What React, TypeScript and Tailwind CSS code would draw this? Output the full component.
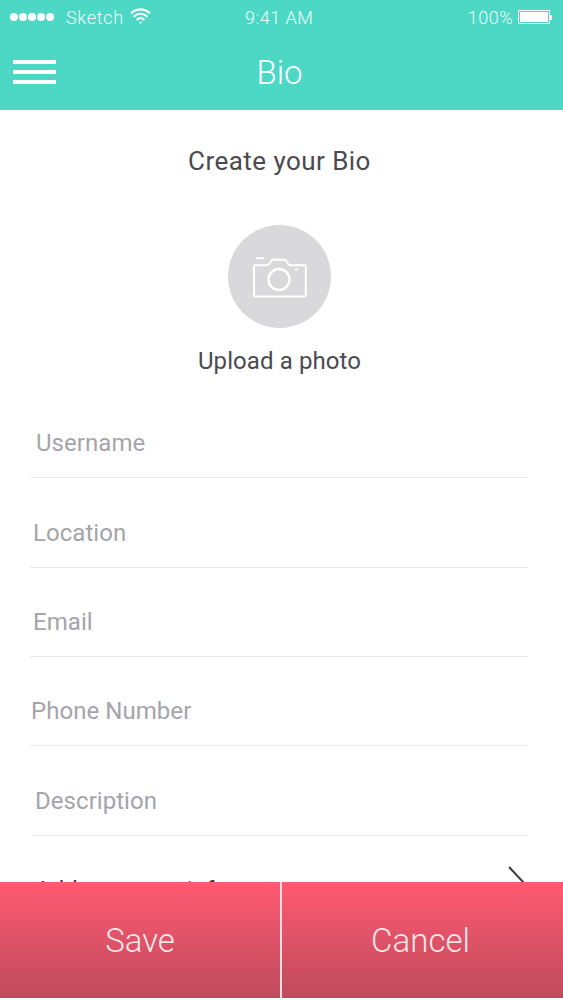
import { Wifi } from 'lucide-react'

const fields = [
  { label: 'Username', textPad: 'pl-[6px]', rowPad: 'pl-[30px]', h: 'h-[90px]' },
  { label: 'Location', textPad: 'pl-[3px]', rowPad: 'pl-[30px]', h: 'h-[90px]' },
  { label: 'Email', textPad: 'pl-[3px]', rowPad: 'pl-[30px]', h: 'h-[89px]' },
  { label: 'Phone Number', textPad: 'pl-[1px]', rowPad: 'pl-[30px]', h: 'h-[89px]' },
  { label: 'Description', textPad: 'pl-[3px]', rowPad: 'pl-[32px]', h: 'h-[90px]' },
]

function CameraIcon() {
  return (
    <svg width="56" height="44" viewBox="0 0 56 44" fill="none" stroke="white" strokeWidth="2" strokeLinejoin="round">
      <path d="M2 12c0-1 .8-1.8 1.8-1.8h11.4c1 0 1.8-.6 2.4-1.6l1.6-2.6c.5-.8 1.3-1.2 2.2-1.2h10.6c.9 0 1.7.4 2.2 1.2l2 3c.6.8 1.4 1.2 2.3 1.2H52c1 0 1.8.8 1.8 1.8v27.6c0 1-.8 1.8-1.8 1.8H3.8c-1 0-1.8-.8-1.8-1.8z" />
      <circle cx="27" cy="24.5" r="10.5" strokeWidth="2.4" />
      <path d="M4 3.2h8" />
      <path d="M43 14.5h2.5" />
    </svg>
  )
}

function Battery() {
  return (
    <div className="flex items-center">
      <div className="h-[14px] w-[32px] border border-white p-px">
        <div className="h-full w-full bg-white" />
      </div>
      <div className="h-[5px] w-[2px] bg-white" />
    </div>
  )
}

export default function App() {
  return (
    <div className="flex h-[1000px] w-[563px] flex-col overflow-hidden bg-white font-['Roboto',sans-serif]">
      <header className="h-[110px] shrink-0 bg-[#4cd8c5] text-white">
        <div className="relative flex h-[34px] items-center justify-between pl-[10px] pr-[11px] font-['Roboto',sans-serif] text-[18px] font-light text-[#effdfa]">
          <div className="flex items-center">
            <div className="flex gap-px">
              {[0, 1, 2, 3, 4].map((i) => <span key={i} className="h-[8px] w-[8px] rounded-full bg-white" />)}
            </div>
            <span className="ml-[12px] tracking-[0.7px]">Sketch</span>
            <Wifi size={21} strokeWidth={2.5} className="ml-[6px] -mt-1 text-white" />
          </div>
          <span className="absolute left-[245px] tracking-[0.5px]">9:41 AM</span>
          <div className="flex items-center gap-[5px]">
            <span className="tracking-[0.5px]">100%</span>
            <Battery />
          </div>
        </div>
        <div className="relative flex h-[76px] items-center justify-center pr-[4px]">
          <div className="absolute left-[13px] top-[26px] flex w-[43px] flex-col gap-[6px]">
            <span className="h-[4px] bg-white" />
            <span className="h-[4px] bg-white" />
            <span className="h-[4px] bg-white" />
          </div>
          <span className="font-['Roboto',sans-serif] text-[33px] font-light leading-none">Bio</span>
        </div>
      </header>

      <main className="min-h-0 flex-1 overflow-hidden">
        <div className="pr-[4px]">
          <h1 className="mt-[36px] text-center text-[26px] leading-[30px] tracking-[0.45px] text-[#4a4a4f]">Create your Bio</h1>
          <div className="mx-auto mt-[49px] flex h-[103px] w-[103px] items-center justify-center rounded-full bg-[#d9d8db]">
            <CameraIcon />
          </div>
          <p className="mt-[18px] text-center text-[24px] leading-[30px] tracking-[0.1px] text-[#4a4a4f]">Upload a photo</p>
        </div>

        <div className="mt-[12px]">
          {fields.map((f) => (
            <div key={f.label} className={`${f.rowPad} ${f.h} pr-[35px]`}>
              <div className={`${f.textPad} flex h-full items-center border-b border-[#e6e8ec] pt-[20px] text-[24px] tracking-[0.05px] text-[#a5a4ab]`}>
                {f.label}
              </div>
            </div>
          ))}
          <div className="flex items-start justify-between pl-[35px] pr-[36px] pt-[39px]">
            <span className="text-[24px] leading-[30px] text-[#3a3a40]">Add your own info</span>
            <svg width="20" height="36" viewBox="0 0 20 36" fill="none" stroke="#3a3a40" strokeWidth="2" className="-mt-[9px]">
              <path d="M2 1l16 17L2 35" />
            </svg>
          </div>
        </div>
      </main>

      <footer className="flex h-[116px] shrink-0 text-[33px] font-light text-[#fbe6e8]">
        <button className="flex w-[282px] items-center justify-center border-r-2 border-[#f4dfe2] bg-gradient-to-b from-[#ff5a72] to-[#bf4a5c] pt-[2px]">Save</button>
        <button className="flex flex-1 items-center justify-center bg-gradient-to-b from-[#ff5a72] to-[#bf4a5c] pr-[4px] pt-[2px]">Cancel</button>
      </footer>
      <div className="h-[2px] shrink-0 bg-white" />
    </div>
  )
}
